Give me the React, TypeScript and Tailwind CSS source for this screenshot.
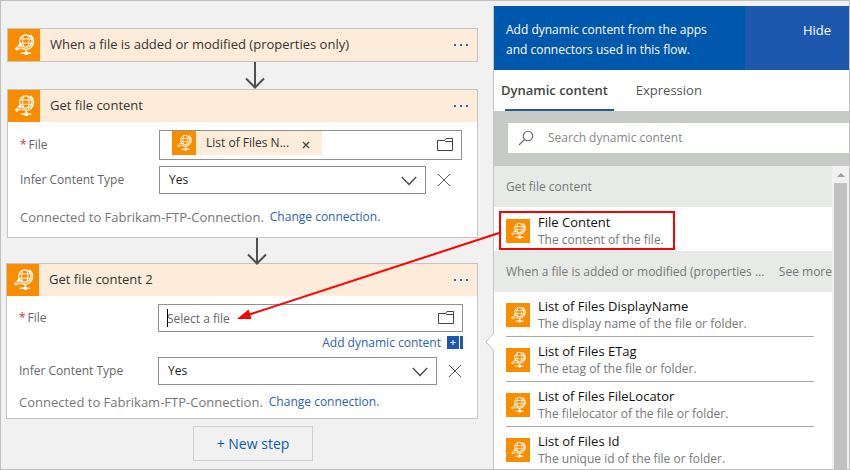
import React from "react";

function FtpIcon({ className }: { className: string }) {
  return (
    <svg viewBox="0 0 32 32" className={`shrink-0 bg-[#fa8c00] ${className}`} fill="none" stroke="#fff" aria-hidden="true">
      <circle cx="17.8" cy="12" r="6.2" strokeWidth="1.2" />
      <path d="M15.800 6.200c-1.600 3.600-1.600 8 0 11.600M19.800 6.200c1.600 3.600 1.600 8 0 11.600M12 10h11.600M12 14.200h11.600" strokeWidth="0.900" />
      <path d="M22.500 5.700c4 4 4 9.500.6 12.500-2.600 2.400-6.600 2.600-9.600.6M18.300 20v6" strokeWidth="1.400" />
      <path d="M12.800 24.200h10.400" strokeWidth="1.400" />
      <path d="M16.700 22.600h3.200v3.200h-3.200z" fill="#fff" stroke="none" />
      <path d="M14.500 16.800h-3.600M12.300 15l-2 1.800 2 1.800M7.500 19.800h5M9.500 18l-2 1.800 2 1.800" strokeWidth="1.200" />
    </svg>
  );
}

function DownArrow() {
  return (
    <svg viewBox="0 0 22 27" className="mx-auto block h-[27px] w-[22px]" fill="none" stroke="#4f4f4f" strokeWidth="2" aria-hidden="true">
      <path d="M11 0v25M2 16.5l9 9 9-9" />
    </svg>
  );
}

function FolderIcon() {
  return (
    <svg viewBox="0 0 18 14" className="h-3.5 w-[18px]" fill="none" stroke="#444" aria-hidden="true">
      <path d="M1.5 2.5h7l1.5-2h6.500v12h-15zM8.500 2.500l1 1h7" />
    </svg>
  );
}

function CardHeader({ title }: { title: string }) {
  return (
    <header className="flex h-8 items-center bg-[#fdecd9] pr-1.5">
      <FtpIcon className="size-8" />
      <h2 className="flex-1 truncate pl-2.5 text-[13px] text-[#333]">{title}</h2>
      <button type="button" aria-label={`Menu for ${title}`} className="flex h-6 w-5 items-center justify-center gap-1">
        <span className="size-0.5 bg-[#2b68c0]" />
        <span className="size-0.5 bg-[#2b68c0]" />
        <span className="size-0.5 bg-[#2b68c0]" />
      </button>
    </header>
  );
}

function FieldLabel({ id, text, required }: { id: string; text: string; required?: boolean }) {
  return (
    <label htmlFor={id} className="w-[139px] shrink-0 text-xs text-[#666]">
      {required && <span className="mr-0.5 text-[#e03030]">*</span>}
      {text}
    </label>
  );
}

function TypeRow({ id }: { id: string }) {
  return (
    <div className="flex items-center">
      <FieldLabel id={id} text="Infer Content Type" />
      <div className="relative h-7 flex-1">
        <select id={id} defaultValue="Yes" className="size-full appearance-none border border-[#919191] bg-white px-[9px] text-xs text-[#222]">
          <option>Yes</option>
          <option>No</option>
        </select>
        <svg viewBox="0 0 16 10" className="pointer-events-none absolute top-2.5 right-[9px] h-2.5 w-4" fill="none" stroke="#444" strokeWidth="1.3" aria-hidden="true">
          <path d="M.8 1l7.200 7.500L15.200 1" />
        </svg>
      </div>
      <button type="button" aria-label="Clear content type" className="ml-2.5 p-px">
        <svg viewBox="0 0 14 14" className="size-3.5" fill="none" stroke="#555" aria-hidden="true">
          <path d="M1 1l12 12M13 1L1 13" />
        </svg>
      </button>
    </div>
  );
}

function Connection() {
  return (
    <p className="flex gap-1.5 text-[13px] leading-5 text-[#777]">
      <span className="text-[13px]">Connected to Fabrikam-FTP-Connection.</span>
      <a href="#connection" className="text-xs leading-5 text-[#2b62b5]">Change connection.</a>
    </p>
  );
}

function Flow() {
  return (
    <main className="min-w-0 flex-1 pt-[27px] pr-[15px] pl-[5px]">
      <section className="ml-px border border-[#c4c4c4]">
        <CardHeader title="When a file is added or modified (properties only)" />
      </section>
      <div className="pr-6 pl-[50px]">
        <DownArrow />
      </div>
      <section className="ml-px h-[149px] border border-[#c4c4c4] bg-white">
        <CardHeader title="Get file content" />
        <div className="pt-2 pr-[15px] pl-3">
          <div className="flex items-center">
            <FieldLabel id="file-1" text="File" required />
            <div className="flex h-[30px] min-w-0 flex-1 items-start border border-[#919191] pl-3">
              <span className="flex h-6 w-[150px] shrink-0 items-center bg-[#fdecd9] text-xs text-[#333]">
                <FtpIcon className="size-6" />
                <span className="flex-1 pl-2.5">List of Files N...</span>
                <button type="button" aria-label="Remove List of Files Name" className="mt-1 mr-3">
                  <svg viewBox="0 0 8 8" className="size-2" fill="none" stroke="#444" strokeWidth="1.3" aria-hidden="true">
                    <path d="M1 1l6 6M7 1L1 7" />
                  </svg>
                </button>
              </span>
              <input id="file-1" type="text" className="h-full min-w-0 flex-1" />
              <button type="button" aria-label="Browse files" className="mr-[7px] self-center"><FolderIcon /></button>
            </div>
          </div>
          <div className="pt-1.5 pr-2.5">
            <TypeRow id="type-1" />
          </div>
          <div className="pt-[13px]"><Connection /></div>
        </div>
      </section>
      <div className="pr-5 pl-[50px]">
        <DownArrow />
      </div>
      <section className="-mt-0.5 h-[156px] border border-[#c4c4c4] bg-white">
        <CardHeader title="Get file content 2" />
        <div className="pt-2 pr-3.5 pl-3">
          <div className="flex items-center">
            <FieldLabel id="file-2" text="File" required />
            <div className="relative flex h-7 min-w-0 flex-1 items-center border border-[#919191]">
              <span className="absolute top-1 left-2 h-[18px] w-px bg-black" />
              <input id="file-2" type="text" placeholder="Select a file" className="h-full min-w-0 flex-1 pl-2 text-xs placeholder:text-[#666]" />
              <button type="button" aria-label="Browse files" className="mr-[7px]"><FolderIcon /></button>
            </div>
          </div>
          <div className="flex h-[25px] items-center justify-end pb-1">
            <button type="button" className="flex items-center gap-1.5 text-xs text-[#2b62b5]">
              Add dynamic content
              <svg viewBox="0 0 16 13" className="h-[13px] w-4" aria-hidden="true">
                <path d="M0 0h12v13H0zM13 0h3v13h-3z" fill="#1e58b0" />
                <path d="M3.500 6.500h5M6 4v5" stroke="#fff" />
              </svg>
            </button>
          </div>
          <TypeRow id="type-2" />
          <div className="pt-[7px]"><Connection /></div>
        </div>
      </section>
      <div className="flex justify-center pt-[7px] pl-[22px]">
        <button type="button" className="h-[35px] w-[120px] border border-[#cfcfcf] text-sm text-[#0a5cb0]">+ New step</button>
      </div>
    </main>
  );
}

const outputs = [
  { name: "List of Files DisplayName", text: "The display name of the file or folder." },
  { name: "List of Files ETag", text: "The etag of the file or folder." },
  { name: "List of Files FileLocator", text: "The filelocator of the file or folder." },
  { name: "List of Files Id", text: "The unique id of the file or folder." },
];

function Output({ name, text }: { name: string; text: string }) {
  return (
    <button type="button" className="flex w-full items-center gap-2 text-left leading-[17px] whitespace-nowrap">
      <FtpIcon className="size-6" />
      <span>
        <span className="block text-[13px] leading-[17px] text-[#111]">{name}</span>
        <span className="block text-xs leading-[17px] text-[#777]">{text}</span>
      </span>
    </button>
  );
}

function DynamicPanel() {
  return (
    <aside className="relative flex w-[356px] shrink-0 flex-col border-l border-[#c4c4c4] bg-white">
      <svg viewBox="0 0 9 18" className="absolute top-[327px] -left-[9px] h-[18px] w-[9px]" aria-hidden="true">
        <path d="M9 0L1 9l8 9" fill="#fff" stroke="#c4c4c4" />
      </svg>
      <div className="flex h-16 shrink-0 bg-[#0058ad] text-xs leading-5 text-white">
        <p className="w-[251px] pt-3.5 pl-3 leading-5">
          Add dynamic content from the apps
          <br />
          and connectors used in this flow.
        </p>
        <button type="button" className="flex flex-1 items-start justify-end bg-[#1e58ae] pt-3.5 pr-[18px] text-[13px] leading-5">Hide</button>
      </div>
      <div role="tablist" className="flex h-[41px] shrink-0 items-stretch gap-7 pl-[7px] text-[13px]">
        <button type="button" role="tab" aria-selected="true" className="relative font-semibold text-[#444]">
          Dynamic content
          <span className="absolute -right-1.5 bottom-0 left-1 h-0.5 bg-[#235d8f]" />
        </button>
        <button type="button" role="tab" aria-selected="false" className="text-[#555]">Expression</button>
      </div>
      <div className="h-[55px] shrink-0 bg-[#c8cac8] pt-3 pl-3.5">
        <div className="flex h-[30px] items-center bg-white pl-2.5">
          <svg viewBox="0 0 16 16" className="size-4" fill="none" stroke="#666" strokeWidth="1.100" aria-hidden="true">
            <circle cx="10" cy="6" r="4.800" />
            <path d="M6.500 9.500L1 15" />
          </svg>
          <input type="search" aria-label="Search dynamic content" placeholder="Search dynamic content" className="min-w-0 flex-1 pl-3.5 text-xs placeholder:text-[#888]" />
        </div>
      </div>
      <div className="flex min-h-0 flex-1">
        <div className="min-w-0 flex-1 overflow-hidden text-xs">
          <h3 className="flex h-[41px] items-center bg-[#e8eae8] pl-3 text-[#777]">Get file content</h3>
          <div className="h-11 px-[5px] pt-1">
            <div className="flex h-[39px] w-[176px] items-center border-2 border-[#f00] pl-[5px]">
              <Output name="File Content" text="The content of the file." />
            </div>
          </div>
          <div className="flex h-[41px] items-center justify-between bg-[#e8eae8] pl-3 text-[#777]">
            <h3 className="whitespace-nowrap">When a file is added or modified (properties ...</h3>
            <button type="button" className="shrink-0">See more</button>
          </div>
          <ul className="pr-[18px] pl-3">
            {outputs.map((o) => (
              <li key={o.name} className="flex h-[45px] items-center border-b border-[#aaa] pt-0.5">
                <Output {...o} />
              </li>
            ))}
          </ul>
        </div>
        <div className="flex w-[17px] flex-col bg-[#f1f1f1] pt-[7px]" aria-hidden="true">
          <svg viewBox="0 0 8 4" className="mx-auto h-1 w-2" fill="#a0a0a0"><path d="M0 4l4-4 4 4z" /></svg>
          <div className="mx-auto mt-1.5 w-[13px] flex-1 bg-[#c1c1c1]" />
        </div>
      </div>
    </aside>
  );
}

export default function App() {
  return (
    <div className="relative flex h-screen flex-col overflow-hidden border border-[#c0c0c0] bg-[#f1f1f1] font-['Open_Sans',sans-serif]">
      <div className="flex min-h-0 flex-1">
        <Flow />
        <div className="flex pt-[5px]">
          <DynamicPanel />
        </div>
      </div>
      <svg viewBox="0 0 264 92" className="pointer-events-none absolute top-[230px] right-[349px] h-[92px] w-[264px]" aria-hidden="true">
        <path d="M263 2L12 84" stroke="#f00" strokeWidth="2" />
        <path d="M1 88l11.500-9.500 3 9.500z" fill="#f00" />
      </svg>
    </div>
  );
}
